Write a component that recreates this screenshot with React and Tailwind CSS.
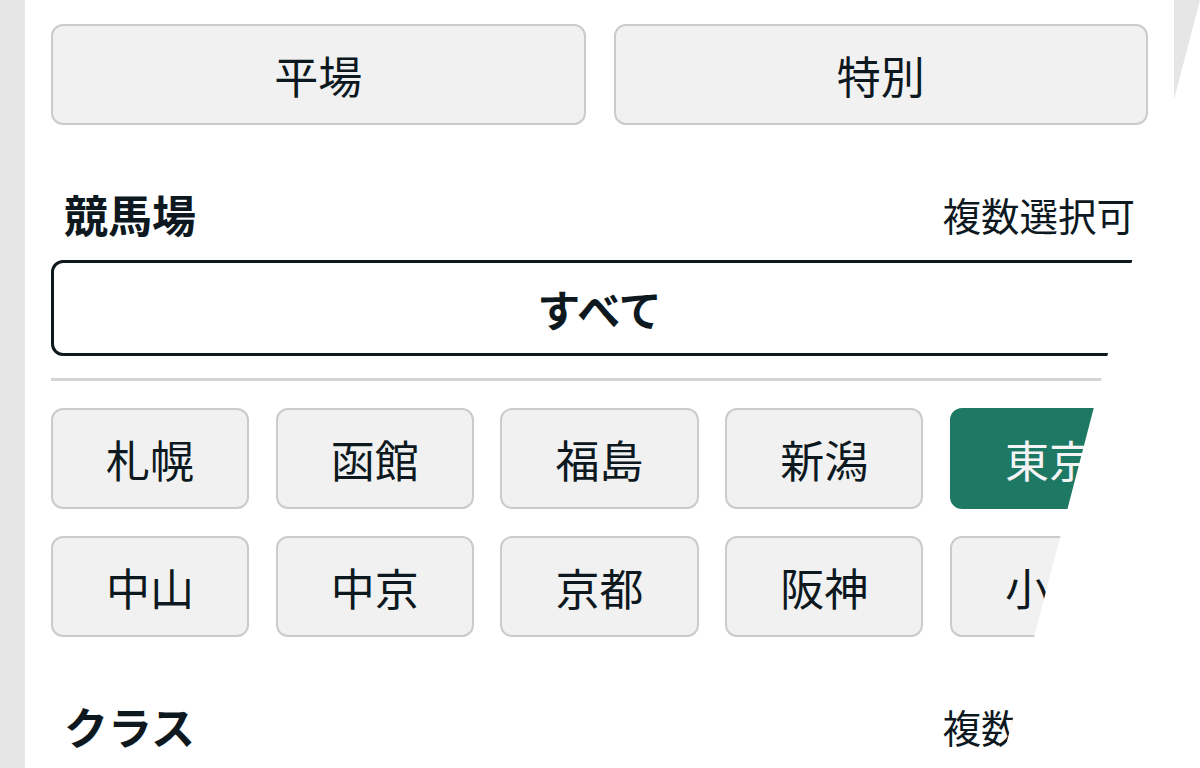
import React from 'react'

const VENUES = [
  { name: '札幌' },
  { name: '函館' },
  { name: '福島' },
  { name: '新潟' },
  { name: '東京', active: true },
  { name: '中山' },
  { name: '中京' },
  { name: '京都' },
  { name: '阪神' },
  { name: '小倉' },
]

const FONT = { fontFamily: '"Noto Sans CJK JP", "Noto Sans", sans-serif' }

function SectionHeader({ title, note }) {
  return (
    <div className="flex items-center justify-between h-[60px] px-[13px]">
      <h2 className="text-[44px] font-bold leading-none text-[#0d191f]">{title}</h2>
      <span className="text-[38.5px] leading-none text-[#0d191f]">{note}</span>
    </div>
  )
}

export default function App() {
  return (
    <div className="relative w-[1200px] h-[768px] overflow-hidden bg-[#e6e6e6] flex" style={FONT}>
      {/* パネル */}
      <div className="ml-[25px] w-[1149px] h-full bg-white px-[26px] pt-[24px]">
        <div className="grid grid-cols-2 gap-x-[28px]">
          {['平場', '特別'].map((t) => (
            <button
              key={t}
              className="h-[101px] rounded-[12px] border-2 border-[#cbcbcb] bg-[#f1f1f1] text-[44px] leading-none text-[#0d191f]"
            >
              {t}
            </button>
          ))}
        </div>

        <div className="mt-[59px]">
          <SectionHeader title="競馬場" note="複数選択可" />
        </div>

        <button className="mt-[16px] w-full h-[96px] rounded-[12px] border-[3px] border-[#0d191f] bg-white text-[43px] font-bold leading-none text-[#0d191f]">
          すべて
        </button>

        <div className="mt-[22px] h-[3px] bg-[#d4d4d4]" />

        <div className="mt-[27px] grid grid-cols-5 gap-x-[26.5px] gap-y-[27px]">
          {VENUES.map((v) => (
            <button
              key={v.name}
              className={`h-[101px] rounded-[12px] text-[44px] leading-none ${
                v.active
                  ? 'bg-[#1e7964] text-[#f4f4f4] border-2 border-[#1e7964]'
                  : 'bg-[#f1f1f1] text-[#0d191f] border-2 border-[#cbcbcb]'
              }`}
            >
              {v.name}
            </button>
          ))}
        </div>

        <div className="mt-[59px]">
          <SectionHeader title="クラス" note="複数選択可" />
        </div>
      </div>

      {/* 切り取りの白い三角 */}
      <div className="absolute inset-0 bg-white [clip-path:polygon(1200px_0,1200px_768px,1000px_768px)]" />
    </div>
  )
}
